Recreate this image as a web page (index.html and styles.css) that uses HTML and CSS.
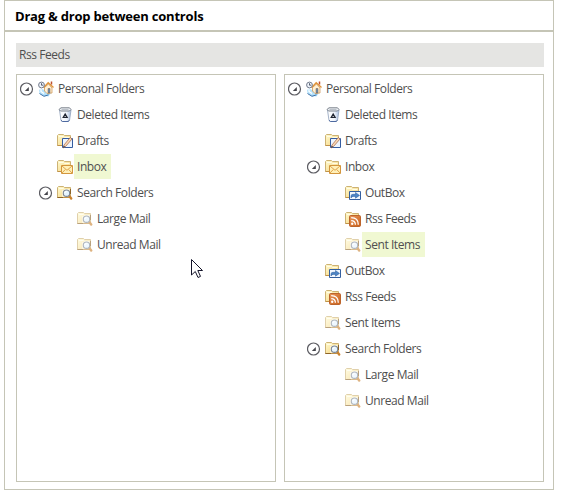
FILE: index.html
```html
<!DOCTYPE html>
<html lang="en">
<head>
<meta charset="utf-8">
<title>Drag &amp; drop between controls</title>
<link rel="stylesheet" href="styles.css">
</head>
<body>
<svg class="defs" aria-hidden="true">
  <defs>
    <linearGradient id="gold" x1="0" y1="0" x2="1" y2="1"><stop offset="0" stop-color="#fffbd0"/><stop offset="1" stop-color="#f6d27c"/></linearGradient>
    <linearGradient id="bin" x1="0" y1="0" x2="1" y2="0"><stop offset="0" stop-color="#ffffff"/><stop offset=".6" stop-color="#f1f5fb"/><stop offset="1" stop-color="#a9bfe0"/></linearGradient>
    <linearGradient id="rssfill" x1="0" y1="0" x2="1" y2="1"><stop offset="0" stop-color="#e9965a"/><stop offset="1" stop-color="#c9621c"/></linearGradient>
    <symbol id="folder" viewBox="0 0 16 16">
      <path d="M.5 12.5V2.5L1.5 1.5H6.5L7.5 2.5H13.5V12.5Z" fill="url(#gold)" stroke="#cdb274"/>
      <path d="M2 3.5H6.5L7.5 4.5H12.5" fill="none" stroke="#fffce6"/>
      <path d="M.5 12.5H13" fill="none" stroke="#c09248"/>
    </symbol>
    <symbol id="toggle" viewBox="0 0 14 14">
      <circle cx="6.5" cy="7" r="6" fill="#fff" stroke="#5c5c62" stroke-width="1.2"/>
      <path d="M8.8 5V9H4.8Z" fill="#45454b"/>
    </symbol>
    <symbol id="home" viewBox="0 0 16 16">
      <path d="M1 9L3 7.5L13 12L10.5 15.5L6 15L1.5 12Z" fill="#b4e2fc"/>
      <path d="M1.5 12.5L6 15.3L10.5 13.8" fill="none" stroke="#386fa9"/>
      <path d="M6.5 6.5L10.5 3L14 7V12L9 12.5L6.5 10Z" fill="#fff1d5" stroke="#c78c4a" stroke-width=".7"/>
      <path d="M5.5 6.8L10.2 1.8L15.5 6.5" fill="none" stroke="#e0943a" stroke-width="1.5"/>
      <path d="M13.5 .5V3.5" stroke="#bd5030" stroke-width="1.5"/>
      <path d="M10 7.5H12V12H10Z" fill="#668fbd" stroke="#895c36" stroke-width=".5"/>
      <circle cx="3.5" cy="4" r="2.9" fill="#eef3fa" stroke="#737b8b"/>
      <path d="M3.5 2.2V4.2H5.2" fill="none" stroke="#333e54" stroke-width=".8"/>
      <path d="M3 8V10.5L6 12.5" fill="none" stroke="#fff" stroke-width="1.2"/>
    </symbol>
    <symbol id="trash" viewBox="0 0 16 16">
      <path d="M2.5 3L4 13.5L5.5 14.5H11L12.5 13.5L14 3Z" fill="url(#bin)" stroke="#9aa9c1" stroke-width=".9"/>
      <path d="M2 2.5L4 .8H12.5L14 2.5L12.5 4H3.5Z" fill="#f0f3f6" stroke="#6c7480" stroke-width=".9"/>
      <path d="M4.5 2.4H11.5" stroke="#b4bbc4"/>
      <path d="M8.2 7L10.2 10.4H6.2Z" fill="#fff" stroke="#202531" stroke-width="1.2"/>
      <path d="M4 13.3L5.5 14.5H11L12.5 13.3" fill="none" stroke="#4d69a0"/>
    </symbol>
    <symbol id="drafts" viewBox="0 0 16 16">
      <use href="#folder"/>
      <path d="M5.5 5.5H15.5V14.5H5.5Z" fill="#edf5ff" stroke="#355ca0"/>
      <path d="M6 15L7 12L13.2 4.5L15 6L8.5 13.5Z" fill="#fbd9b4" stroke="#9f6044" stroke-width=".7"/>
      <path d="M6 15L6.8 12.7L8.2 13.7Z" fill="#333e54"/>
    </symbol>
    <symbol id="inbox" viewBox="0 0 16 16">
      <use href="#folder"/>
      <path d="M4.5 6.5H15.5V14.5H4.5Z" fill="#fff0b8" stroke="#d3963d"/>
      <path d="M5 7L10 11.3L15 7M5 14L8.3 10.5M15 14L11.7 10.5" fill="none" stroke="#dc9c3f" stroke-width=".9"/>
    </symbol>
    <symbol id="search" viewBox="0 0 16 16">
      <use href="#folder"/>
      <path d="M5 5H13V12H5Z" fill="#fff" opacity=".5"/>
      <path d="M12.3 11L14.2 13.5" stroke="#c9822f" stroke-width="2.4" stroke-linecap="round"/>
      <circle cx="9.5" cy="8.2" r="3.2" fill="#e6f5ff" stroke="#7c8694" stroke-width="1.1"/>
      <path d="M7.8 8Q8 6.5 9.7 6.5" fill="none" stroke="#fff" stroke-width="1.2"/>
      <path d="M.5 12.5H6M13.5 4V9" stroke="#8c6428"/>
    </symbol>
    <symbol id="outbox" viewBox="0 0 16 16">
      <use href="#folder"/>
      <path d="M4.5 6.5H15.5V14.5H4.5Z" fill="#f2f8ff" stroke="#345f9f"/>
      <path d="M6 13V11Q6 9.3 8 9.3H10.5V7.5L14.5 10.4L10.5 13.2V11.4H8Q6.7 11.4 6 13Z" fill="#4d86c7" stroke="#245797" stroke-width=".5"/>
    </symbol>
    <symbol id="rss" viewBox="0 0 16 16">
      <use href="#folder"/>
      <rect x="4.5" y="4.5" width="11" height="11" rx="1.2" fill="url(#rssfill)" stroke="#bc642b"/>
      <circle cx="7.2" cy="12.8" r="1.2" fill="#fff"/>
      <path d="M6.2 9.6Q10.4 9.6 10.4 13.8M6.2 6.7Q13.3 6.7 13.3 13.8" fill="none" stroke="#fff" stroke-width="1.3"/>
    </symbol>
  </defs>
</svg>

<main class="frame">
  <h1 class="title"><span>Drag &amp; drop between controls</span></h1>
  <div class="content">
    <div class="drop-bar"><span>Rss Feeds</span></div>
    <div class="panels">
      <section class="panel">
        <ul class="tree">
          <li><div class="row"><svg class="toggle"><use href="#toggle"/></svg><svg class="icon"><use href="#home"/></svg><span class="label">Personal Folders</span></div>
            <ul class="level-one">
              <li><div class="row"><i class="toggle"></i><svg class="icon"><use href="#trash"/></svg><span class="label">Deleted Items</span></div></li>
              <li><div class="row"><i class="toggle"></i><svg class="icon"><use href="#drafts"/></svg><span class="label">Drafts</span></div></li>
              <li><div class="row"><i class="toggle"></i><svg class="icon"><use href="#inbox"/></svg><span class="label selected">Inbox</span></div></li>
              <li><div class="row"><svg class="toggle"><use href="#toggle"/></svg><svg class="icon"><use href="#search"/></svg><span class="label">Search Folders</span></div>
                <ul class="level-two">
                  <li><div class="row"><i class="toggle"></i><svg class="icon faded"><use href="#search"/></svg><span class="label">Large Mail</span></div></li>
                  <li><div class="row"><i class="toggle"></i><svg class="icon faded"><use href="#search"/></svg><span class="label">Unread Mail</span></div></li>
                </ul>
              </li>
            </ul>
          </li>
        </ul>
      </section>
      <section class="panel">
        <ul class="tree">
          <li><div class="row"><svg class="toggle"><use href="#toggle"/></svg><svg class="icon"><use href="#home"/></svg><span class="label">Personal Folders</span></div>
            <ul class="level-one">
              <li><div class="row"><i class="toggle"></i><svg class="icon"><use href="#trash"/></svg><span class="label">Deleted Items</span></div></li>
              <li><div class="row"><i class="toggle"></i><svg class="icon"><use href="#drafts"/></svg><span class="label">Drafts</span></div></li>
              <li><div class="row"><svg class="toggle"><use href="#toggle"/></svg><svg class="icon"><use href="#inbox"/></svg><span class="label">Inbox</span></div>
                <ul class="level-two">
                  <li><div class="row"><i class="toggle"></i><svg class="icon"><use href="#outbox"/></svg><span class="label">OutBox</span></div></li>
                  <li><div class="row"><i class="toggle"></i><svg class="icon"><use href="#rss"/></svg><span class="label">Rss Feeds</span></div></li>
                  <li><div class="row"><i class="toggle"></i><svg class="icon faded"><use href="#search"/></svg><span class="label selected">Sent Items</span></div></li>
                </ul>
              </li>
              <li><div class="row"><i class="toggle"></i><svg class="icon"><use href="#outbox"/></svg><span class="label">OutBox</span></div></li>
              <li><div class="row"><i class="toggle"></i><svg class="icon"><use href="#rss"/></svg><span class="label">Rss Feeds</span></div></li>
              <li><div class="row"><i class="toggle"></i><svg class="icon faded"><use href="#search"/></svg><span class="label">Sent Items</span></div></li>
              <li><div class="row"><svg class="toggle"><use href="#toggle"/></svg><svg class="icon"><use href="#search"/></svg><span class="label">Search Folders</span></div>
                <ul class="level-two">
                  <li><div class="row"><i class="toggle"></i><svg class="icon faded"><use href="#search"/></svg><span class="label">Large Mail</span></div></li>
                  <li><div class="row"><i class="toggle"></i><svg class="icon faded"><use href="#search"/></svg><span class="label">Unread Mail</span></div></li>
                </ul>
              </li>
            </ul>
          </li>
        </ul>
      </section>
    </div>
  </div>
</main>
<svg class="cursor" viewBox="0 0 13 20"><path d="M.5 .5V16L4.3 12.5L7 18.5L9.5 17.4L6.8 11.5H11.5Z" fill="#fff" stroke="#15152a"/></svg>
</body>
</html>
```
FILE: styles.css
```css
* { box-sizing: border-box; }

body {
  margin: 0;
  background: #fff;
  color: #4f4f4f;
  font: 12px/24px "Open Sans", "Noto Sans", sans-serif;
  letter-spacing: -0.43px;
}

.defs { position: absolute; width: 0; height: 0; }

.frame {
  width: 550px;
  height: 490px;
  margin-left: 4px;
  border: 1px solid #c5c5b6;
}

.title {
  height: 31px;
  margin: 0;
  padding-left: 10px;
  border-bottom: 2px solid #c5c5b6;
  color: #000;
  font-size: 13px;
  line-height: 30px;
  font-weight: 700;
  letter-spacing: -0.21px;
}

.content { padding: 11px 9px 0 11px; }

.drop-bar {
  height: 24px;
  padding-left: 3px;
  background: #e5e5e3;
}

.panels {
  display: flex;
  gap: 8px;
  margin-top: 7px;
}

.panel {
  width: 260px;
  height: 408px;
  padding: 1px 0 0 3px;
  border: 1px solid #c5c5b6;
}

ul { margin: 0; padding: 0; list-style: none; }
.level-one { padding-left: 19px; }
.level-two { padding-left: 20px; }

.row {
  display: flex;
  align-items: center;
  height: 26px;
  padding-bottom: 1px;
}

.toggle { width: 14px; height: 14px; margin-right: 4px; flex: none; }
.icon { width: 16px; height: 16px; flex: none; }
.faded { opacity: .6; }

.label {
  height: 25px;
  margin-left: 1px;
  padding: 0 5px 0 3px;
  line-height: 25px;
  white-space: nowrap;
}

.selected { background: #f0f8d2; }

.cursor {
  position: absolute;
  left: 191px;
  top: 259px;
  width: 13px;
  height: 20px;
}
```
